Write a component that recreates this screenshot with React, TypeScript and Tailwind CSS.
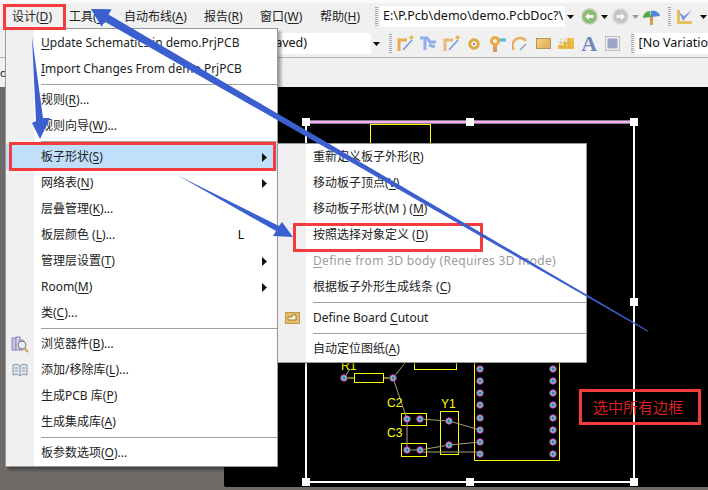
import React from "react";

const font = { fontFamily: '"Noto Sans", "Noto Sans CJK SC", sans-serif' };

type Item = {
  pre?: string;
  key_?: string;
  post?: string;
  sep?: boolean;
  sub?: boolean;
  hint?: string;
  icon?: React.ReactNode;
  active?: boolean;
  off?: boolean;
};

const Label = ({ pre, key_, post }: { pre?: string; key_?: string; post?: string }) => (
  <span className="whitespace-pre">
    {pre}
    <u className="underline-offset-2">{key_}</u>
    {post}
  </span>
);

const BrowseIcon = () => (
  <svg width="18" height="18" viewBox="0 0 18 18">
    <rect x="1" y="3" width="4" height="12" fill="#c9c2e8" stroke="#8f88b8" />
    <rect x="5" y="2" width="4" height="13" fill="#d6d2ee" stroke="#8f88b8" />
    <rect x="9" y="5" width="3" height="10" fill="#c9c2e8" stroke="#8f88b8" />
    <circle cx="11" cy="10" r="4" fill="#e6eef5" stroke="#777" />
    <path d="M13 13l4 4" stroke="#c9a040" strokeWidth="2" />
  </svg>
);

const BookIcon = () => (
  <svg width="16" height="14" viewBox="0 0 16 14">
    <path d="M1 2c3-1 5-1 7 1 2-2 4-2 7-1v10c-3-1-5-1-7 1-2-2-4-2-7-1z" fill="#dfe6f2" stroke="#8a94a8" />
    <path d="M8 3v10M3 5h3M3 8h3M10 5h3M10 8h3" stroke="#8a94a8" />
  </svg>
);

const CutoutIcon = () => (
  <svg width="15" height="12" viewBox="0 0 15 12">
    <rect x="0.5" y="0.5" width="14" height="11" fill="#e9bd62" stroke="#b89a60" />
    <path d="M3 8h8V3H7v2H3z" fill="#fff4d6" stroke="#8a6a30" strokeWidth="0.8" />
  </svg>
);

const mainMenu: Item[] = [
  { key_: "U", post: "pdate Schematics in demo.PrjPCB" },
  { key_: "I", post: "mport Changes From demo.PrjPCB" },
  { sep: true },
  { pre: "规则(", key_: "R", post: ")..." },
  { pre: "规则向导(", key_: "W", post: ")..." },
  { sep: true },
  { pre: "板子形状(", key_: "S", post: ")", sub: true, active: true },
  { pre: "网络表(", key_: "N", post: ")", sub: true },
  { pre: "层叠管理(", key_: "K", post: ")..." },
  { pre: "板层颜色 (", key_: "L", post: ")...", hint: "L" },
  { pre: "管理层设置(", key_: "T", post: ")", sub: true },
  { pre: "Room(", key_: "M", post: ")", sub: true },
  { pre: "类(", key_: "C", post: ")..." },
  { sep: true },
  { pre: "浏览器件(", key_: "B", post: ")...", icon: <BrowseIcon /> },
  { pre: "添加/移除库(", key_: "L", post: ")...", icon: <BookIcon /> },
  { pre: "生成PCB 库(", key_: "P", post: ")" },
  { pre: "生成集成库(", key_: "A", post: ")" },
  { sep: true },
  { pre: "板参数选项(", key_: "O", post: ")..." },
];

const boardMenu: Item[] = [
  { pre: "重新定义板子外形(", key_: "R", post: ")" },
  { pre: "移动板子顶点(", key_: "V", post: ")" },
  { pre: "移动板子形状(M ) (", key_: "M", post: ")" },
  { pre: "按照选择对象定义 (", key_: "D", post: ")" },
  { key_: "D", post: "efine from 3D body (Requires 3D mode)", off: true },
  { pre: "根据板子外形生成线条 (", key_: "C", post: ")" },
  { sep: true },
  { pre: "Define Board ", key_: "C", post: "utout", icon: <CutoutIcon /> },
  { sep: true },
  { pre: "自动定位图纸(", key_: "A", post: ")" },
];

const MenuRows = ({ items }: { items: Item[] }) => (
  <>
    {items.map((it, i) =>
      it.sep ? (
        <div key={i} className="flex h-[5px]">
          <div className="w-[28px] bg-[#f0f0f0]" />
          <div className="flex-1 flex items-center pl-[7px]">
            <div className="h-px w-full bg-[#a0a0a0]" />
          </div>
        </div>
      ) : (
        <div key={i} className={`flex h-[26px] items-center ${it.active ? "bg-[#bfdffb]" : ""}`}>
          <div className={`w-[28px] h-full flex items-center justify-center ${it.active ? "" : "bg-[#f0f0f0]"}`}>
            {it.icon}
          </div>
          <div className={`flex-1 pl-[7px] ${it.off ? "text-[#9b9b9b] tracking-[0.3px]" : "text-[#222]"}`}>
            <Label pre={it.pre} key_={it.key_} post={it.post} />
          </div>
          {it.hint && <span className="mr-[33px]">{it.hint}</span>}
          {it.sub && (
            <svg width="5" height="9" viewBox="0 0 5 9" className="mr-[10px]">
              <path d="M0 0l5 4.500-5 4.500z" fill="#111" />
            </svg>
          )}
        </div>
      )
    )}
  </>
);

const Grip = () => (
  <div className="w-[3px] h-[19px] mx-[2px] bg-[repeating-linear-gradient(to_bottom,#a8a8a8_0,#a8a8a8_1px,#f0f0f0_1px,#f0f0f0_2px)]" />
);

const Caret = ({ color = "#111" }: { color?: string }) => (
  <svg width="7" height="4" viewBox="0 0 7 4">
    <path d="M0 0h7L3.500 4z" fill={color} />
  </svg>
);

const NavDisc = ({ fill, ring, flip }: { fill: string; ring: string; flip?: boolean }) => (
  <svg width="17" height="17" viewBox="0 0 17 17">
    <circle cx="8.500" cy="8.500" r="7.500" fill={fill} stroke={ring} strokeWidth="1.500" />
    <path d={flip ? "M13 8.500L9 5v2H4.500v3H9v2z" : "M4 8.500l4-3.500v2h4.500v3H8v2z"} fill="#f4f6ee" />
  </svg>
);

const RouteIcon = ({ a = "#e8a850", b = "#6d9be0" }: { a?: string; b?: string }) => (
  <svg width="17" height="17" viewBox="0 0 17 17" fill="none">
    <path d="M2 16V5h8" stroke={a} strokeWidth="3" />
    <path d="M6 15l9-10" stroke={b} strokeWidth="1.500" />
    <circle cx="14.500" cy="2.500" r="2" fill="#e8b850" />
  </svg>
);

const toolIcons: React.ReactNode[] = [
  <RouteIcon />,
  <svg width="17" height="15" viewBox="0 0 17 15" fill="none">
    <path d="M0 2h7l3 4h6M5 2v12M9 9l6 2" stroke="#8fb0e8" strokeWidth="3" />
  </svg>,
  <RouteIcon a="#eab878" />,
  <svg width="12" height="12" viewBox="0 0 12 12">
    <circle cx="6" cy="6" r="4.200" fill="none" stroke="#e0a840" strokeWidth="3" />
    <circle cx="6" cy="6" r="1" fill="#9a6a20" />
  </svg>,
  <svg width="17" height="16" viewBox="0 0 17 16" fill="none">
    <path d="M6 8v8" stroke="#d89a60" strokeWidth="4" />
    <path d="M10 4h7" stroke="#58b8d8" strokeWidth="3" />
    <circle cx="6" cy="5" r="3.500" stroke="#e8ac40" strokeWidth="3" />
  </svg>,
  <svg width="17" height="15" viewBox="0 0 17 15" fill="none">
    <path d="M2 14A7 7 0 0 1 14 5" stroke="#e8ae60" strokeWidth="2.500" />
    <path d="M8 14l6-6" stroke="#88a0c8" strokeWidth="1.500" />
  </svg>,
  <div className="w-[15px] h-[11px] border border-[#b09468] bg-[linear-gradient(135deg,#f8d468,#d8a868)]" />,
  <svg width="16" height="11" viewBox="0 0 16 11">
    <path d="M0 11V7h5V4h4V0h7v11z" fill="#f0c050" />
    <path d="M0 9h16M0 5h16M3 0v11M7 0v11M11 0v11" stroke="#c89a30" strokeWidth="0.500" />
  </svg>,
  <span className="text-[22px] leading-none text-[#6f86b8] font-bold" style={{ fontFamily: '"Liberation Serif", serif' }}>
    A
  </span>,
  <svg width="15" height="15" viewBox="0 0 15 15">
    <rect x="2.500" y="2.500" width="10" height="10" fill="#9aa6c8" />
    <rect x="0.500" y="0.500" width="14" height="14" fill="none" stroke="#8a8a8a" strokeDasharray="1 1" />
  </svg>,
];

const Pad = ({ x, y }: { x: number; y: number }) => (
  <g>
    <circle cx={x} cy={y} r="3.300" fill="#c8c8c8" stroke="#a020a0" strokeWidth="1" />
    <circle cx={x} cy={y} r="1.700" fill="#0a9a9a" />
  </g>
);

const Handle = ({ x, y }: { x: number; y: number }) => <rect x={x - 4} y={y - 4} width="8" height="8" fill="#fff" />;

const boardPadsY = [369, 381, 393, 405, 418, 430, 442, 454];

const Board = () => (
  <svg className="block w-full h-full" viewBox="224 87 484 400">
    <g fill="none" stroke="#ffff00" strokeWidth="1">
      <rect x="370.500" y="124.500" width="60" height="30" />
      <rect x="414.500" y="350.500" width="42" height="19" />
      <rect x="354.500" y="373.500" width="29" height="9" />
      <path d="M348 378h6M384 378h5" />
      <rect x="401.500" y="413.500" width="25" height="12" />
      <rect x="401.500" y="443.500" width="25" height="13" />
      <rect x="440.500" y="411.500" width="18" height="43" />
      <path d="M474.500 340v120.500h85V340" />
    </g>
    <g fill="none" stroke="#a4a47c" strokeWidth="1">
      <path d="M344 378l6-9M393 378l12-15M393 378l14 41M407 419v31M420 419l29 2 31 9M407 450h13l29-5 31-3M420 452h60" />
    </g>
    <g fill="#ffff00" fontSize="12" style={{ fontFamily: '"Liberation Sans", sans-serif' }}>
      <text x="341" y="370">R1</text>
      <text x="387" y="407">C2</text>
      <text x="387" y="437">C3</text>
      <text x="441" y="408">Y1</text>
    </g>
    <Pad x={344} y={378} />
    <Pad x={393} y={378} />
    <Pad x={407} y={419} />
    <Pad x={420} y={419} />
    <Pad x={407} y={450} />
    <Pad x={420} y={450} />
    <Pad x={449} y={421} />
    <Pad x={449} y={445} />
    {boardPadsY.map((y) => (
      <g key={y}>
        <Pad x={480} y={y} />
        <Pad x={553} y={y} />
      </g>
    ))}
    <g fill="none" stroke="#fff" strokeWidth="2">
      <path d="M306 122V482H634V122" />
    </g>
    <path d="M306 122H634" stroke="#fff" strokeWidth="3" />
    <path d="M306 122H634" stroke="#ff55ff" strokeWidth="1" />
    <Handle x={306} y={122} />
    <Handle x={470} y={122} />
    <Handle x={634} y={122} />
    <Handle x={634} y={302} />
    <Handle x={306} y={482} />
    <Handle x={470} y={482} />
    <Handle x={634} y={482} />
  </svg>
);

const topMenu = [
  { pre: "设计(", key_: "D", w: "w-[57px]" },
  { pre: "工具(", key_: "T", w: "w-[55px]" },
  { pre: "自动布线(", key_: "A", w: "w-[80px]" },
  { pre: "报告(", key_: "R", w: "w-[56px]" },
  { pre: "窗口(", key_: "W", w: "w-[60px]" },
  { pre: "帮助(", key_: "H", w: "w-[53px]" },
];

export default function App() {
  return (
    <div className="relative w-[708px] h-[490px] overflow-hidden bg-[#6e6a68] flex flex-col text-[12px] leading-none" style={font}>
      {/* Toolbars */}
      <div className="h-[87px] bg-[#f0f0f0] border-t-[3px] border-[#fafafa] flex flex-col">
        <div className="h-[27px] flex items-center pl-[12px]">
          {topMenu.map((m) => (
            <div key={m.pre} className={`${m.w} text-[#222]`}>
              <Label pre={m.pre} key_={m.key_} post=")" />
            </div>
          ))}
          <Grip />
          <div className="w-[196px] h-[21px] bg-white flex items-center pl-[3px]">
            <div className="w-[182px] whitespace-nowrap text-[12.500px] text-[#111]">E:\P.Pcb\demo\demo.PcbDoc?\</div>
            <div className="flex-1 h-full bg-[#f0f0f0] flex items-center justify-center">
              <Caret />
            </div>
          </div>
          <div className="ml-[5px] flex items-center gap-[3px]">
            <NavDisc fill="#8cb878" ring="#b8d0a8" />
            <Caret />
            <div className="ml-[1px]">
              <NavDisc fill="#c4c4c4" ring="#d8d8d8" flip />
            </div>
            <Caret color="#999" />
            <svg width="18" height="17" viewBox="0 0 18 17">
              <path d="M8 8h3v9H8z" fill="#d89a50" />
              <path d="M1 10c0-4 3-7 7-7l1 6z" fill="#58a848" />
              <path d="M9 3c4-1 8 1 9 5l-9 1z" fill="#4a88d8" />
            </svg>
          </div>
          <div className="ml-[6px]">
            <Grip />
          </div>
          <svg width="17" height="16" viewBox="0 0 17 16" className="ml-[3px]">
            <path d="M1 1v14h15v-3H4V1z" fill="#e8c060" />
            <path d="M3 3l4 9 9-11-8 6z" fill="#7a9ae0" />
          </svg>
          <div className="ml-[7px]">
            <Caret />
          </div>
        </div>

        <div className="h-[28px] border-b border-[#b4b4b4] flex items-center pl-[150px]">
          <div className="w-[235px] h-[21px] bg-white flex items-center">
            <div className="w-[157px] text-right text-[12.500px] text-[#111]">(Not Saved)</div>
            <div className="ml-auto w-[12px] h-full bg-[#f0f0f0] flex items-center justify-center">
              <Caret />
            </div>
          </div>
          <div className="ml-[4px]">
            <Grip />
          </div>
          <div className="flex items-center">
            {toolIcons.map((icon, i) => (
              <div key={i} className="w-[23px] flex items-center justify-center">
                {icon}
              </div>
            ))}
          </div>
          <div className="ml-[5px]">
            <Grip />
          </div>
          <div className="flex-1 h-[21px] bg-white flex items-center pl-[3px] whitespace-nowrap text-[12.500px] text-[#111]">
            [No Variatio
          </div>
        </div>

        <div className="flex-1 flex items-center">
          <span className="text-[11px] text-[#222]">o</span>
        </div>
      </div>

      {/* Canvas */}
      <div className="h-[400px] flex">
        <div className="w-[224px]" />
        <div className="flex-1 bg-black rounded-bl-[2px]">
          <Board />
        </div>
      </div>

      {/* Open menus */}
      <div className="absolute left-[5px] top-[28px] w-[273px] h-[439px] pt-px bg-white border border-[#989898] shadow-[3px_3px_3px_rgba(0,0,0,0.35)]">
        <MenuRows items={mainMenu} />
      </div>
      <div className="absolute left-[277px] top-[143px] w-[310px] h-[220px] bg-white border border-[#989898] shadow-[2px_2px_3px_rgba(0,0,0,0.3)]">
        <MenuRows items={boardMenu} />
      </div>

      {/* Annotations */}
      <div className="absolute left-[3px] top-[4px] w-[63px] h-[26px] border-[3px] border-[#f53c3c]" />
      <div className="absolute left-[9px] top-[142px] w-[267px] h-[29px] border-[3px] border-[#f53c3c]" />
      <div className="absolute left-[293px] top-[223px] w-[190px] h-[29px] border-[3px] border-[#f53c3c]" />
      <div className="absolute left-[579px] top-[389px] w-[122px] h-[36px] pr-[4px] border-[3px] border-[#f53c3c] flex items-center justify-center text-[15px] text-[#d82020]">
        选中所有边框
      </div>
      <svg className="absolute inset-0 pointer-events-none" width="708" height="490" viewBox="0 0 708 490">
        <polygon points="91,9 111.600,9.300 108.500,14.600 648,330.500 647.500,331.500 104.500,21.400 101.600,26.700" fill="#3c5fd0" />
        <polygon points="32,37 43,118 50,118 40,139 32,123 36,121" fill="#3c5fd0" />
        <polygon points="177,175 279,226 282,222 293,237 273,236 276,231" fill="#3c5fd0" />
      </svg>
    </div>
  );
}
